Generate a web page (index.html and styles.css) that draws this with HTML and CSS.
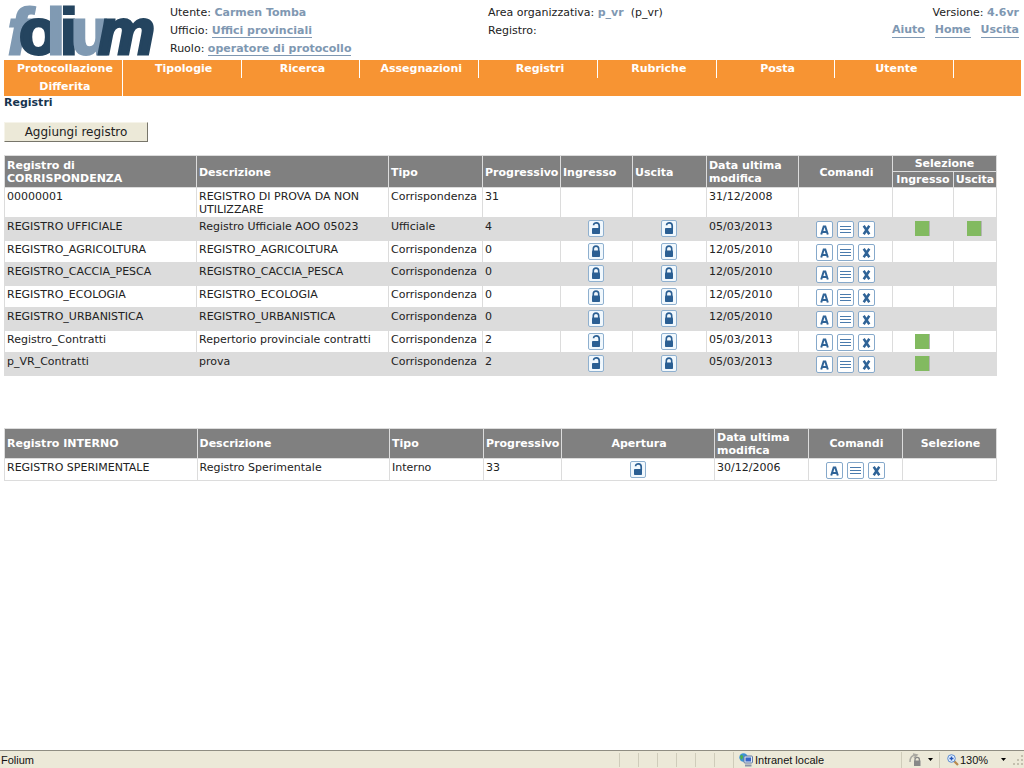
FILE: index.html
```html
<!DOCTYPE html>
<html lang="it">
<head>
<meta charset="utf-8">
<title>Folium</title>
<link rel="stylesheet" href="styles.css">
</head>
<body>
<svg class="defs" aria-hidden="true">
  <symbol id="closed" viewBox="0 0 16 17"><rect x=".5" y=".5" width="15" height="16" rx="1.5" fill="#f1f8fd" stroke="#8fb0cf"/><path d="M5.3 8V5.8a2.7 2.7 0 0 1 5.4 0V8" fill="none" stroke="#2b5f93" stroke-width="1.6"/><rect x="4" y="7.5" width="8" height="6.5" rx=".8" fill="#2b5f93"/></symbol>
  <symbol id="open" viewBox="0 0 16 17"><rect x=".5" y=".5" width="15" height="16" rx="1.5" fill="#f1f8fd" stroke="#8fb0cf"/><path d="M5.6 5.2c0-3.1 5.6-3.3 5.6.6V9" fill="none" stroke="#2b5f93" stroke-width="1.7"/><rect x="4" y="8" width="8" height="6" rx=".8" fill="#2b5f93"/></symbol>
  <symbol id="edit" viewBox="0 0 17 17"><rect x=".5" y=".5" width="16" height="16" rx="1.5" fill="#fff" stroke="#86a9cb"/><path d="M5.200 13.500L7.700 5.500h1.600L11.800 13.500M6 11h5" fill="none" stroke="#2f6397" stroke-width="2"/></symbol>
  <symbol id="list" viewBox="0 0 17 17"><rect x=".5" y=".5" width="16" height="16" rx="1.5" fill="#fff" stroke="#86a9cb"/><path d="M3 5.500h11M3 8.500h11M3 11.500h11" stroke="#4a7bad"/></symbol>
  <symbol id="remove" viewBox="0 0 17 17"><rect x=".5" y=".5" width="16" height="16" rx="1.5" fill="#fff" stroke="#86a9cb"/><path d="M5.700 4.800l5.600 8.400M11.300 4.800l-5.600 8.400" stroke="#2f6397" stroke-width="2.500"/></symbol>
</svg>
<header class="top">
  <svg class="logo" viewBox="0 0 156 54" role="img" aria-label="folium">
    <text class="wordmark" y="50"><tspan class="light slant" x="4">f</tspan><tspan class="dark" x="15">o</tspan><tspan class="light" x="43">l</tspan><tspan class="dark" x="56">i</tspan><tspan class="light" x="67">u</tspan><tspan class="dark slant" x="94">m</tspan></text>
  </svg>
  <div class="info user">
    <div>Utente: <b>Carmen Tomba</b></div>
    <div>Ufficio: <a href="#">Uffici provinciali</a></div>
    <div>Ruolo: <a href="#">operatore di protocollo</a></div>
  </div>
  <div class="info area">
    <div>Area organizzativa: <b>p_vr</b>&nbsp; (p_vr)</div>
    <div>Registro:</div>
  </div>
  <div class="info version">
    <div>Versione: <b>4.6vr</b></div>
    <div class="links"><a href="#">Aiuto</a><a href="#">Home</a><a href="#">Uscita</a></div>
  </div>
</header>
<nav class="menu">
  <a href="#">Protocollazione Differita</a><a href="#">Tipologie</a><a href="#">Ricerca</a><a href="#">Assegnazioni</a><a href="#">Registri</a><a href="#">Rubriche</a><a href="#">Posta</a><a href="#">Utente</a>
</nav>
<main>
  <h1>Registri</h1>
  <button class="add" type="button">Aggiungi registro</button>
  <table class="grid">
    <colgroup><col><col><col class="w94"><col class="w78"><col class="w72"><col class="w74"><col class="w92"><col class="w94"><col class="w61"><col class="w43"></colgroup>
    <thead>
      <tr><th rowspan="2">Registro di<br>CORRISPONDENZA</th><th rowspan="2">Descrizione</th><th rowspan="2">Tipo</th><th rowspan="2">Progressivo</th><th rowspan="2">Ingresso</th><th rowspan="2">Uscita</th><th rowspan="2">Data ultima modifica</th><th rowspan="2" class="c">Comandi</th><th colspan="2" class="c sub">Selezione</th></tr>
      <tr><th class="c sub">Ingresso</th><th class="c sub">Uscita</th></tr>
    </thead>
    <tbody>
      <tr><td>00000001</td><td>REGISTRO DI PROVA DA NON UTILIZZARE</td><td>Corrispondenza</td><td>31</td><td></td><td></td><td>31/12/2008</td><td></td><td></td><td></td></tr>
      <tr><td>REGISTRO UFFICIALE</td><td>Registro Ufficiale AOO 05023</td><td>Ufficiale</td><td>4</td>
        <td class="i"><button type="button" class="lock" aria-label="Aperto"><svg><use href="#open"/></svg></button></td><td class="i"><button type="button" class="lock" aria-label="Aperto"><svg><use href="#open"/></svg></button></td><td>05/03/2013</td>
        <td class="i"><div class="cmds"><button type="button" aria-label="Modifica"><svg><use href="#edit"/></svg></button><button type="button" aria-label="Dettagli"><svg><use href="#list"/></svg></button><button type="button" aria-label="Elimina"><svg><use href="#remove"/></svg></button></div></td><td class="i"><button type="button" class="sel" aria-label="Seleziona"></button></td><td class="i"><button type="button" class="sel" aria-label="Seleziona"></button></td></tr>
      <tr><td>REGISTRO_AGRICOLTURA</td><td>REGISTRO_AGRICOLTURA</td><td>Corrispondenza</td><td>0</td>
        <td class="i"><button type="button" class="lock" aria-label="Chiuso"><svg><use href="#closed"/></svg></button></td><td class="i"><button type="button" class="lock" aria-label="Chiuso"><svg><use href="#closed"/></svg></button></td><td>12/05/2010</td>
        <td class="i"><div class="cmds"><button type="button" aria-label="Modifica"><svg><use href="#edit"/></svg></button><button type="button" aria-label="Dettagli"><svg><use href="#list"/></svg></button><button type="button" aria-label="Elimina"><svg><use href="#remove"/></svg></button></div></td><td></td><td></td></tr>
      <tr><td>REGISTRO_CACCIA_PESCA</td><td>REGISTRO_CACCIA_PESCA</td><td>Corrispondenza</td><td>0</td>
        <td class="i"><button type="button" class="lock" aria-label="Chiuso"><svg><use href="#closed"/></svg></button></td><td class="i"><button type="button" class="lock" aria-label="Chiuso"><svg><use href="#closed"/></svg></button></td><td>12/05/2010</td>
        <td class="i"><div class="cmds"><button type="button" aria-label="Modifica"><svg><use href="#edit"/></svg></button><button type="button" aria-label="Dettagli"><svg><use href="#list"/></svg></button><button type="button" aria-label="Elimina"><svg><use href="#remove"/></svg></button></div></td><td></td><td></td></tr>
      <tr><td>REGISTRO_ECOLOGIA</td><td>REGISTRO_ECOLOGIA</td><td>Corrispondenza</td><td>0</td>
        <td class="i"><button type="button" class="lock" aria-label="Chiuso"><svg><use href="#closed"/></svg></button></td><td class="i"><button type="button" class="lock" aria-label="Chiuso"><svg><use href="#closed"/></svg></button></td><td>12/05/2010</td>
        <td class="i"><div class="cmds"><button type="button" aria-label="Modifica"><svg><use href="#edit"/></svg></button><button type="button" aria-label="Dettagli"><svg><use href="#list"/></svg></button><button type="button" aria-label="Elimina"><svg><use href="#remove"/></svg></button></div></td><td></td><td></td></tr>
      <tr><td>REGISTRO_URBANISTICA</td><td>REGISTRO_URBANISTICA</td><td>Corrispondenza</td><td>0</td>
        <td class="i"><button type="button" class="lock" aria-label="Chiuso"><svg><use href="#closed"/></svg></button></td><td class="i"><button type="button" class="lock" aria-label="Chiuso"><svg><use href="#closed"/></svg></button></td><td>12/05/2010</td>
        <td class="i"><div class="cmds"><button type="button" aria-label="Modifica"><svg><use href="#edit"/></svg></button><button type="button" aria-label="Dettagli"><svg><use href="#list"/></svg></button><button type="button" aria-label="Elimina"><svg><use href="#remove"/></svg></button></div></td><td></td><td></td></tr>
      <tr><td>Registro_Contratti</td><td>Repertorio provinciale contratti</td><td>Corrispondenza</td><td>2</td>
        <td class="i"><button type="button" class="lock" aria-label="Aperto"><svg><use href="#open"/></svg></button></td><td class="i"><button type="button" class="lock" aria-label="Chiuso"><svg><use href="#closed"/></svg></button></td><td>05/03/2013</td>
        <td class="i"><div class="cmds"><button type="button" aria-label="Modifica"><svg><use href="#edit"/></svg></button><button type="button" aria-label="Dettagli"><svg><use href="#list"/></svg></button><button type="button" aria-label="Elimina"><svg><use href="#remove"/></svg></button></div></td><td class="i"><button type="button" class="sel" aria-label="Seleziona"></button></td><td></td></tr>
      <tr><td>p_VR_Contratti</td><td>prova</td><td>Corrispondenza</td><td>2</td>
        <td class="i"><button type="button" class="lock" aria-label="Aperto"><svg><use href="#open"/></svg></button></td><td class="i"><button type="button" class="lock" aria-label="Chiuso"><svg><use href="#closed"/></svg></button></td><td>05/03/2013</td>
        <td class="i"><div class="cmds"><button type="button" aria-label="Modifica"><svg><use href="#edit"/></svg></button><button type="button" aria-label="Dettagli"><svg><use href="#list"/></svg></button><button type="button" aria-label="Elimina"><svg><use href="#remove"/></svg></button></div></td><td class="i"><button type="button" class="sel" aria-label="Seleziona"></button></td><td></td></tr>
    </tbody>
  </table>
  <table class="grid internal">
    <colgroup><col><col><col class="w94"><col class="w78"><col class="w153"><col class="w94"><col class="w94"><col class="w94"></colgroup>
    <thead><tr><th>Registro INTERNO</th><th>Descrizione</th><th>Tipo</th><th>Progressivo</th><th class="c">Apertura</th><th>Data ultima modifica</th><th class="c">Comandi</th><th class="c">Selezione</th></tr></thead>
    <tbody><tr><td>REGISTRO SPERIMENTALE</td><td>Registro Sperimentale</td><td>Interno</td><td>33</td>
      <td class="i"><button type="button" class="lock" aria-label="Aperto"><svg><use href="#open"/></svg></button></td><td>30/12/2006</td>
      <td class="i"><div class="cmds"><button type="button" aria-label="Modifica"><svg><use href="#edit"/></svg></button><button type="button" aria-label="Dettagli"><svg><use href="#list"/></svg></button><button type="button" aria-label="Elimina"><svg><use href="#remove"/></svg></button></div></td><td></td></tr></tbody>
  </table>
</main>
<footer class="status">
  <span class="page">Folium</span>
  <i></i><i></i><i></i><i></i><i></i><i></i>
  <span class="zone"><svg width="14" height="14" viewBox="0 0 14 14"><circle cx="4.500" cy="4.500" r="4.200" fill="#3c93d6"/><path d="M1 3c2-2 3-1 3 1s-2 2-2 3" fill="#4fb04a"/><rect x="5" y="3" width="8.500" height="7" rx="1" fill="#dfe9f5" stroke="#6079a0"/><rect x="6.500" y="4.500" width="5.500" height="4" fill="#3865c8"/><path d="M6 12.500h6.500" stroke="#8994a8" stroke-width="2"/></svg>Intranet locale</span>
  <span class="shield"><svg width="14" height="14" viewBox="0 0 14 14"><path d="M2 9c0-4 2-7 6-7M5 1l4 1-3 3" fill="none" stroke="#aaa9a2" stroke-width="1.500"/><path d="M7 8V6.500a2.200 2.200 0 0 1 4.400 0V8" fill="none" stroke="#888" stroke-width="1.300"/><rect x="6" y="7.500" width="6.500" height="5.500" fill="#888"/></svg><svg width="5" height="3"><path d="M0 0h5L2.500 3z"/></svg></span>
  <span class="zoom"><svg width="12" height="12" viewBox="0 0 12 12"><path d="M6.500 6.500l4.500 4.500" stroke="#b98a4c" stroke-width="2.200"/><circle cx="4.500" cy="4.500" r="3.800" fill="#e4f0ff" stroke="#5b8bd0"/><path d="M2.500 4.500h4M4.500 2.500v4" stroke="#2456b8" stroke-width="1.400"/></svg>130%<svg class="arrow" width="5" height="3"><path d="M0 0h5L2.500 3z"/></svg></span>
  <svg class="grip" width="12" height="12" viewBox="0 0 12 12"><path d="M9 1h2v2H9zM9 5h2v2H9zM9 9h2v2H9zM5 5h2v2H5zM5 9h2v2H5zM1 9h2v2H1z" fill="#c3bfae"/></svg>
</footer>
</body>
</html>
```
FILE: styles.css
```css
* { box-sizing: border-box; }
body {
  margin: 0;
  min-height: 100vh;
  display: flex;
  flex-direction: column;
  background: #fff;
  color: #222;
  font: 11px/13px "DejaVu Sans", sans-serif;
}
.defs { display: none; }
button { margin: 0; padding: 0; border: 0; background: none; font: inherit; color: inherit; }
svg { display: block; }

.top {
  display: grid;
  grid-template-columns: 166px 318px 1fr auto;
  height: 60px;
  padding: 4px 5px 0 4px;
}
.logo { width: 156px; height: 54px; overflow: visible; }
.wordmark { font: bold 64px "Liberation Sans", sans-serif; stroke-width: 3px; }
.slant { font-style: italic; }
.light { fill: #809ab3; stroke: #809ab3; }
.dark { fill: #24445f; stroke: #24445f; }
.info { line-height: 18px; white-space: nowrap; }
.info b, .info a { font-weight: bold; color: #7f98b2; }
.info a { text-decoration: none; border-bottom: 1px solid #7f98b2; }
.version { text-align: right; }
.links { display: flex; justify-content: flex-end; gap: 10px; line-height: 14px; padding-top: 1px; }

.menu {
  display: flex;
  align-items: flex-start;
  margin: 0 3px 0 4px;
  background: #f79433;
}
.menu a {
  flex: 0 1 11.68%;
  padding: 0 4px 0 8px;
  border-right: 1px solid #fff;
  color: #fff;
  font-weight: bold;
  line-height: 18px;
  text-align: center;
  text-decoration: none;
}

main { flex: 1; padding: 0 27px 0 4px; }
h1 { margin: 0; color: #17344f; font-size: 11px; line-height: 13px; }
.add {
  display: block;
  width: 144px;
  height: 20px;
  margin: 13px 0;
  background: #ece9d8;
  border: 1px solid;
  border-color: #f6f4ea #77756a #77756a #f6f4ea;
  font-size: 12px;
}

.grid { width: 100%; table-layout: fixed; border-collapse: collapse; }
.grid th, .grid td { padding: 2px 1px 1px 2px; border: 1px solid #dcdcdc; text-align: left; }
.grid th { background: #808080; color: #fff; height: 32px; padding: 2px 0 1px 2px; }
.grid th.sub { height: 16px; padding: 1px 0; }
.grid .c { text-align: center; }
.grid td { height: 22px; vertical-align: top; }
.grid tbody tr:nth-child(even) { background: #dcdcdc; }
.grid tbody tr:nth-child(even) td { height: 23px; }
.grid td.i { padding: 2px 0 0; }
.grid.internal { margin-top: 52px; }
.grid.internal th { height: 30px; padding: 1px 0 1px 2px; }
.w43 { width: 43px; }
.w61 { width: 61px; }
.w72 { width: 72px; }
.w74 { width: 74px; }
.w78 { width: 78px; }
.w92 { width: 92px; }
.w94 { width: 94px; }
.w153 { width: 153px; }
.lock { display: block; margin: 0 auto; }
.lock svg { width: 16px; height: 17px; }
.cmds { display: flex; justify-content: center; gap: 4px; padding-top: 1px; }
.cmds svg { width: 17px; height: 17px; }
.sel {
  display: block;
  width: 15px;
  height: 15px;
  margin: 1px auto 0;
  background: #82ba60;
  border-right: 1px solid #b4b4b4;
}

.status {
  display: flex;
  align-items: center;
  height: 18px;
  background: #ece9d8;
  border-top: 1px solid #8f8d82;
  color: #111;
  font: 11px/16px "Liberation Sans", sans-serif;
}
.page { flex: 1; padding-left: 1px; }
.status i { width: 19px; height: 14px; border-left: 1px solid #cfccba; }
.zone, .shield, .zoom { display: flex; align-items: center; height: 16px; }
.zone { gap: 2px; width: 168px; padding-left: 5px; border-left: 1px solid #cfccba; }
.shield { gap: 6px; width: 38px; padding-left: 6px; border-left: 1px solid #cfccba; }
.zoom { gap: 1px; width: 73px; padding-left: 7px; border-left: 1px solid #cfccba; }
.zoom .arrow { margin-left: 12px; }
```
